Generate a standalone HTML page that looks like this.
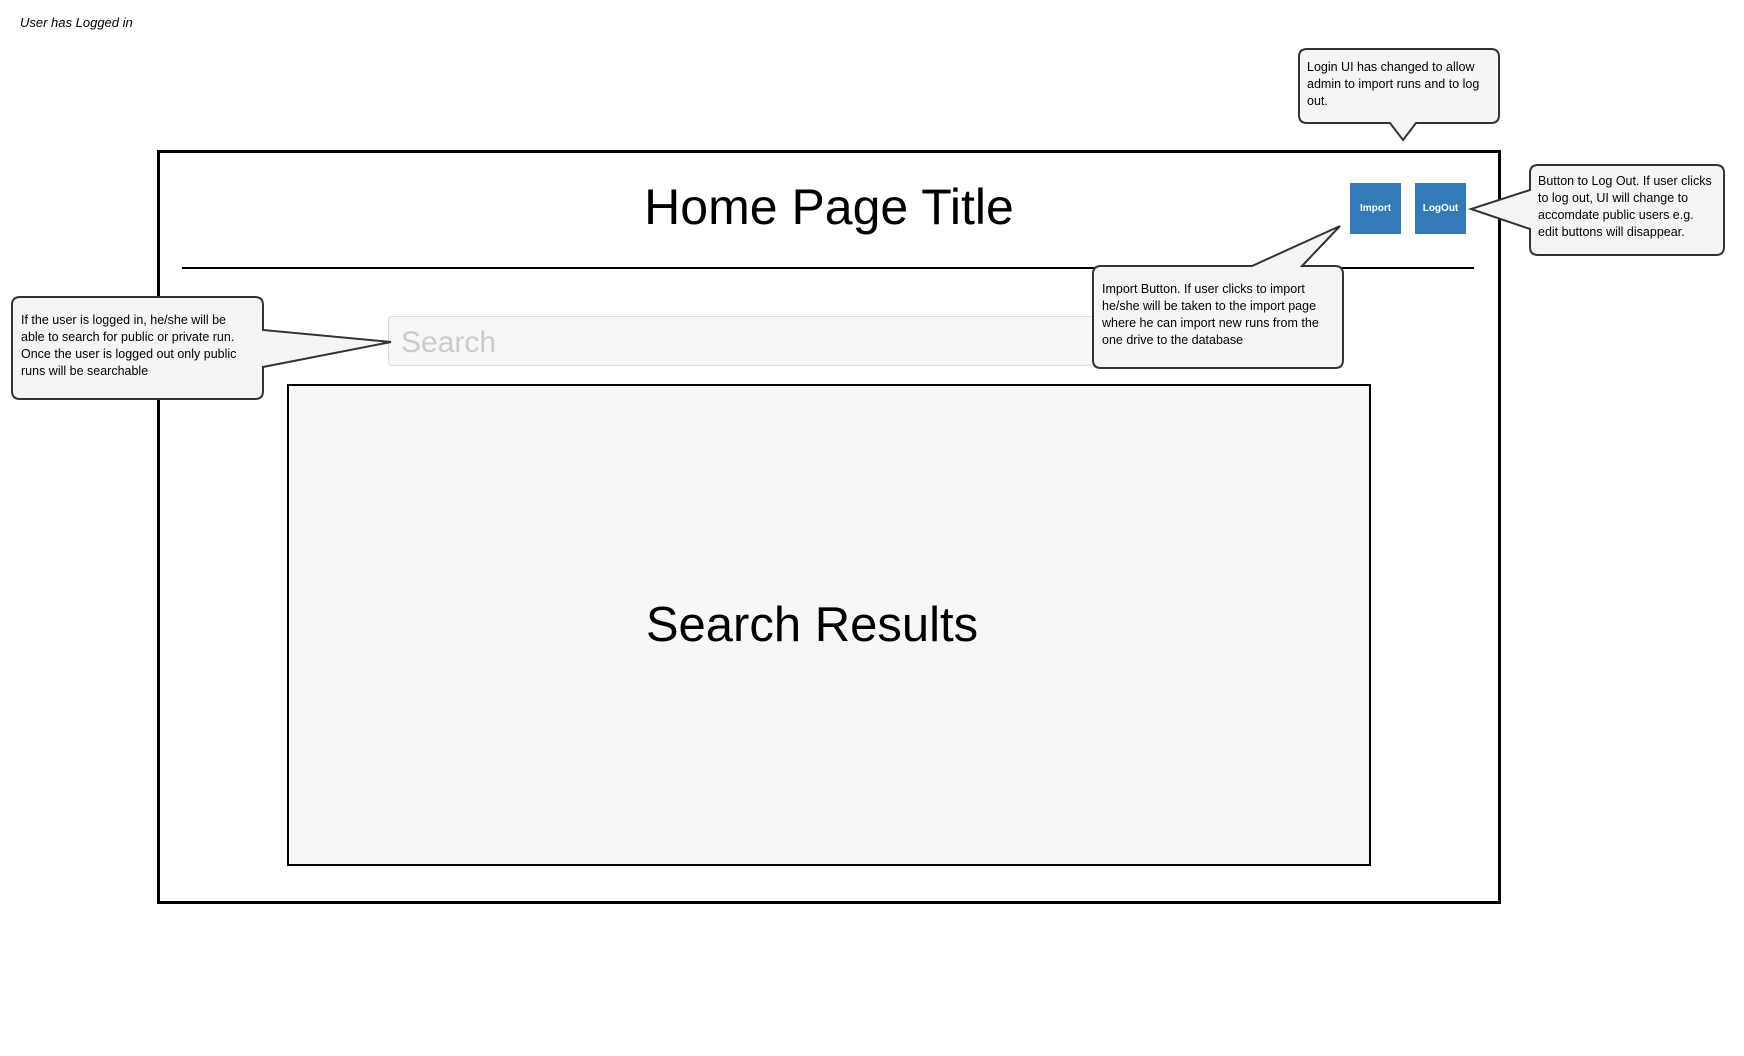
<!DOCTYPE html>
<html><head><meta charset="utf-8"><style>
body{margin:0;width:1744px;height:1056px;background:#fff;position:relative;overflow:hidden;font-family:"Liberation Sans",Arial,sans-serif}
.a{position:absolute}
.t{position:absolute;font-size:12.5px;line-height:17px;color:#000}
</style></head><body>
<div class="a" style="left:20px;top:15px;font-size:13px;font-style:italic">User has Logged in</div>
<div class="a" style="left:157px;top:150px;width:1338px;height:748px;border:3px solid #000"></div>
<div class="a" style="left:0;width:1658px;top:177px;text-align:center;font-size:50px;line-height:60px">Home Page Title</div>
<div class="a" style="left:182px;top:267px;width:1292px;height:2px;background:#000"></div>
<div class="a" style="left:1350px;top:183px;width:51px;height:51px;background:#337ab7;color:#fff;font-size:10px;font-weight:bold;text-align:center;line-height:51px">Import</div>
<div class="a" style="left:1415px;top:183px;width:51px;height:51px;background:#337ab7;color:#fff;font-size:10px;font-weight:bold;text-align:center;line-height:51px">LogOut</div>
<div class="a" style="left:388px;top:316px;width:890px;height:48px;background:#f7f7f7;border:1px solid #ddd;border-radius:3px"></div>
<div class="a" style="left:401px;top:323px;font-size:30px;line-height:40px;color:#ccc">Search</div>
<div class="a" style="left:287px;top:384px;width:1080px;height:478px;background:#f7f7f7;border:2px solid #000"></div>
<div class="a" style="left:272px;width:1080px;top:595px;text-align:center;font-size:49px;line-height:60px">Search Results</div>
<svg class="a" style="left:0;top:0" width="1744" height="1056" fill="#f5f5f5" stroke="#333" stroke-width="2">
<path d="M1314,49 H1498 Q1506,49 1506,57 V115 Q1506,123 1498,123 H1423 L1410,140 L1397,123 H1314 Q1306,123 1306,115 V57 Q1306,49 1314,49 Z" transform="translate(-7,0)"/>
<path d="M1546,165 H1724 Q1732,165 1732,173 V247 Q1732,255 1724,255 H1546 Q1538,255 1538,247 V229 L1479,209 L1538,190 V173 Q1538,165 1546,165 Z" transform="translate(-8,0)"/>
<path d="M1107,266 H1258 L1346,226 L1308,266 H1341 Q1349,266 1349,274 V360 Q1349,368 1341,368 H1107 Q1099,368 1099,360 V274 Q1099,266 1107,266 Z" transform="translate(-6,0)"/>
<path d="M20,297 H255 Q263,297 263,305 V330 L391,342 L263,367 V391 Q263,399 255,399 H20 Q12,399 12,391 V305 Q12,297 20,297 Z"/>
</svg>
<div class="t" style="left:1307px;top:59px">Login UI has changed to allow<br>admin to import runs and to log<br>out.</div>
<div class="t" style="left:1538px;top:173px">Button to Log Out. If user clicks<br>to log out, UI will change to<br>accomdate public users e.g.<br>edit buttons will disappear.</div>
<div class="t" style="left:1102px;top:281px">Import Button. If user clicks to import<br>he/she will be taken to the import page<br>where he can import new runs from the<br>one drive to the database</div>
<div class="t" style="left:21px;top:312px">If the user is logged in, he/she will be<br>able to search for public or private run.<br>Once the user is logged out only public<br>runs will be searchable</div>
</body></html>
